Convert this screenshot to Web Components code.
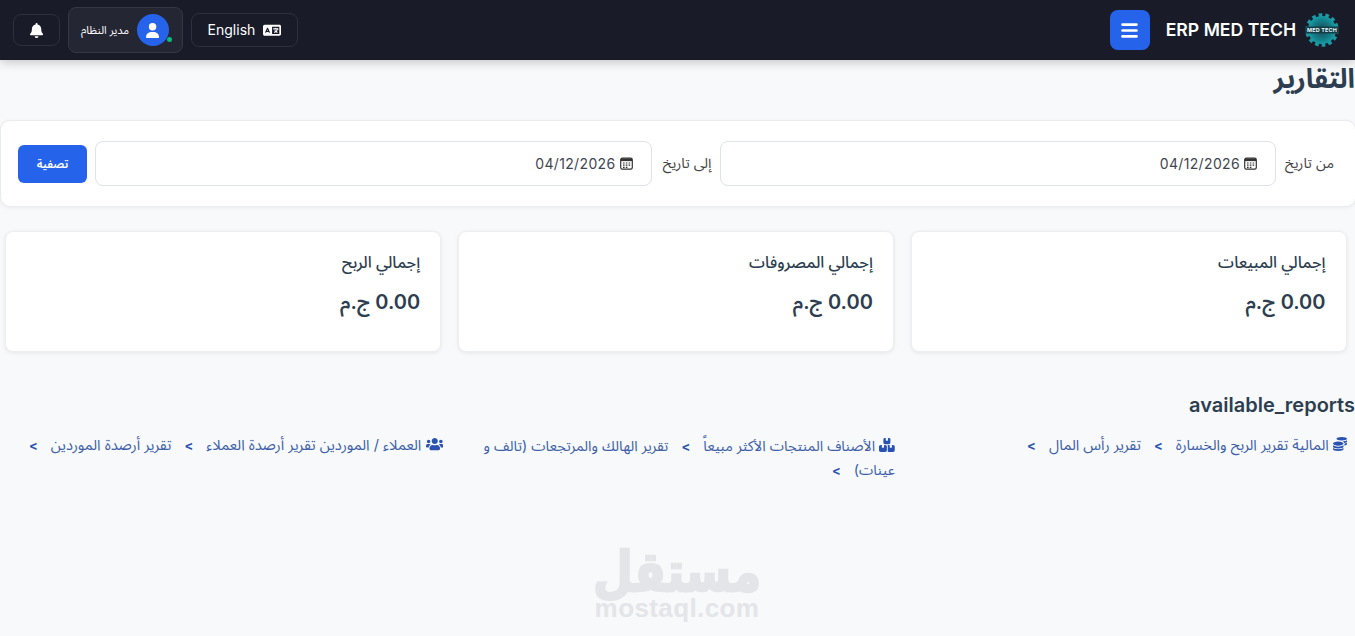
<!DOCTYPE html>
<html lang="ar" dir="rtl">
<head>
<meta charset="utf-8">
<title>التقارير</title>
<style>
html,body{margin:0;padding:0;background:#f8f9fb;overflow:hidden}
body{font-family:Inter,"Noto Sans Arabic","Noto Sans","DejaVu Sans",sans-serif;color:#2c3e50;height:636px;position:relative}
main{display:block}
</style>
</head>
<body>
<app-header></app-header>
<main>
  <page-title>التقارير</page-title>
  <filter-card></filter-card>
  <stat-row>
    <stat-card label="إجمالي المبيعات" value="0.00 ج.م"></stat-card>
    <stat-card label="إجمالي المصروفات" value="0.00 ج.م"></stat-card>
    <stat-card label="إجمالي الربح" value="0.00 ج.م"></stat-card>
  </stat-row>
  <report-section heading="available_reports">
    <report-group icon="coins" name="المالية" links="تقرير الربح والخسارة|تقرير رأس المال"></report-group>
    <report-group icon="boxes" name="الأصناف" links="المنتجات الأكثر مبيعاً|تقرير الهالك والمرتجعات (تالف و عينات)"></report-group>
    <report-group icon="users" name="العملاء / الموردين" links="تقرير أرصدة العملاء|تقرير أرصدة الموردين"></report-group>
  </report-section>
</main>
<water-mark></water-mark>
<script>
const ICONS={
 bell:['0 0 448 512','M224 0c-17.7 0-32 14.3-32 32V51.2C119 66 64 130.6 64 208v18.8c0 47-17.3 92.4-48.5 127.6l-7.4 8.3c-8.4 9.4-10.4 22.9-5.3 34.4S19.4 416 32 416H416c12.6 0 24-7.4 29.2-18.9s3.1-25-5.3-34.4l-7.4-8.3C401.3 319.2 384 273.9 384 226.8V208c0-77.4-55-142-128-156.8V32c0-17.7-14.3-32-32-32zm45.3 493.3c12-12 18.7-28.3 18.7-45.3H224 160c0 17 6.7 33.3 18.7 45.3s28.3 18.7 45.3 18.7s33.3-6.7 45.3-18.7z'],
 user:['0 0 448 512','M224 256A128 128 0 1 0 224 0a128 128 0 1 0 0 256zm-45.7 48C79.8 304 0 383.8 0 482.3C0 498.7 13.3 512 29.7 512H418.3c16.4 0 29.7-13.3 29.7-29.7C448 383.8 368.2 304 269.7 304H178.3z'],
 users:['0 0 640 512','M96 224c35.3 0 64-28.7 64-64s-28.7-64-64-64-64 28.7-64 64 28.7 64 64 64zm448 0c35.3 0 64-28.7 64-64s-28.7-64-64-64-64 28.7-64 64 28.7 64 64 64zm32 32h-64c-17.6 0-33.5 7.1-45.1 18.6 40.3 22.1 68.9 62 75.1 109.4h66c17.7 0 32-14.3 32-32v-32c0-35.3-28.7-64-64-64zm-256 0c61.9 0 112-50.1 112-112S381.9 32 320 32 208 82.1 208 144s50.1 112 112 112zm76.8 32h-8.3c-20.8 10-43.9 16-68.5 16s-47.6-6-68.5-16h-8.3C179.6 288 128 339.6 128 403.2V432c0 26.5 21.5 48 48 48h288c26.5 0 48-21.5 48-48v-28.8c0-63.6-51.6-115.2-115.2-115.2zm-223.7-13.4C161.5 263.1 145.6 256 128 256H64c-35.3 0-64 28.7-64 64v32c0 17.7 14.3 32 32 32h65.9c6.3-47.4 34.9-87.3 75.2-109.4z'],
 coins:['0 0 512 512','M0 405.3V448c0 35.3 86 64 192 64s192-28.7 192-64v-42.7C342.7 434.4 267.2 448 192 448S41.3 434.4 0 405.3zM320 128c106 0 192-28.7 192-64S426 0 320 0 128 28.7 128 64s86 64 192 64zM0 300.4V352c0 35.3 86 64 192 64s192-28.7 192-64v-51.6c-41.3 34-116.9 51.6-192 51.6S41.3 334.4 0 300.4zm416 11c57.3-11.1 96-31.7 96-55.4v-42.7c-23.2 16.4-57.3 27.6-96 34.5v63.6zM192 160C86 160 0 195.8 0 240s86 80 192 80 192-35.8 192-80-86-80-192-80zm219.3 56.3c60-10.8 100.7-32 100.7-56.3v-42.7c-35.5 25.1-96.5 38.6-160.7 41.8 29.5 14.3 51.2 33.5 60 57.2z'],
 boxes:['0 0 576 512','M248 0H208c-26.5 0-48 21.5-48 48V160c0 35.3 28.7 64 64 64H352c35.3 0 64-28.7 64-64V48c0-26.5-21.5-48-48-48H328V80c0 8.8-7.2 16-16 16H264c-8.8 0-16-7.2-16-16V0zM64 256c-35.3 0-64 28.7-64 64V448c0 35.3 28.7 64 64 64H224c35.3 0 64-28.7 64-64V320c0-35.3-28.7-64-64-64H184v80c0 8.8-7.2 16-16 16H120c-8.8 0-16-7.2-16-16V256H64zM352 512H512c35.3 0 64-28.7 64-64V320c0-35.3-28.7-64-64-64H472v80c0 8.8-7.2 16-16 16H408c-8.8 0-16-7.2-16-16V256H352c-15 0-28.8 5.1-39.7 13.8c4.9 10.4 7.7 22 7.7 34.2V464c0 12.2-2.8 23.8-7.7 34.2C323.2 506.9 337 512 352 512z'],
 language:['0 0 640 512','M0 128C0 92.7 28.7 64 64 64H256h48 16H576c35.3 0 64 28.7 64 64V384c0 35.3-28.7 64-64 64H320 304 256 64c-35.3 0-64-28.7-64-64V128zm320 0V384H576V128H320zM178.3 175.9c-3.2-7.2-10.4-11.9-18.3-11.9s-15.1 4.7-18.3 11.9l-64 144c-4.5 10.1 .1 21.9 10.2 26.4s21.9-.1 26.4-10.2l8.9-20.1h73.6l8.9 20.1c4.5 10.1 16.3 14.6 26.4 10.2s14.6-16.3 10.2-26.4l-64-144zM160 233.2L179 276H141l19-42.8zM448 164c11 0 20 9 20 20v4h44 16c11 0 20 9 20 20s-9 20-20 20h-2l-1.6 4.5c-8.9 24.4-22.4 46.6-39.6 65.4c.9 .6 1.8 1.1 2.7 1.6l18.9 11.3c9.5 5.7 12.5 18 6.9 27.4s-18 12.5-27.4 6.9l-18.9-11.3c-4.5-2.7-8.8-5.5-13.1-8.5c-10.6 7.5-21.9 14-34 19.4l-3.6 1.6c-10.1 4.5-21.9-.1-26.4-10.2s.1-21.9 10.2-26.4l3.6-1.6c6.4-2.9 12.6-6.1 18.5-9.8l-12.2-12.2c-7.8-7.8-7.8-20.5 0-28.3s20.5-7.8 28.3 0l14.6 14.6 .5 .5c12.4-13.1 22.5-28.3 29.8-45H448 376c-11 0-20-9-20-20s9-20 20-20h52v-4c0-11 9-20 20-20z']
};
const svg=(n,h)=>{const[v,d]=ICONS[n];const[,, w,ht]=v.split(' ').map(Number);return `<svg xmlns="http://www.w3.org/2000/svg" viewBox="${v}" height="${h}" width="${h*w/ht}" fill="currentColor" aria-hidden="true"><path d="${d}"/></svg>`};
class Base extends HTMLElement{
  constructor(){super();this.attachShadow({mode:'open'})}
  connectedCallback(){this.shadowRoot.innerHTML=this.render()}
}
class AppHeader extends Base{render(){return `<style>
:host{display:flex;justify-content:space-between;align-items:center;height:60px;box-sizing:border-box;padding:0 16px 0 13px;background:#191b29;color:#fff;box-shadow:0 2px 10px rgba(0,0,0,.22);position:relative;z-index:2}
.side{display:flex;align-items:center}
.brand{gap:9px}
.brand b{font:600 17.6px/1 Inter,sans-serif;direction:ltr;margin-left:7px;white-space:nowrap}
.menu{width:40px;height:40px;border-radius:8px;background:#2563eb;border:0;color:#fff;display:flex;align-items:center;justify-content:center;padding:0}
.tools{gap:8px}
.btn{box-sizing:border-box;display:flex;align-items:center;justify-content:center;border:1px solid #2c2f3e;border-radius:8px;color:#fff;background:transparent}
.lang{width:107px;height:34px;gap:8px;font:400 14px/1 Inter,sans-serif}
.lang span{direction:ltr}
.userb{width:115px;height:46px;background:#242633;border-color:#343744;gap:8px;justify-content:flex-start;padding-inline-start:13px}
.userb span{font-size:11px;white-space:nowrap}
.av{width:32px;height:32px;border-radius:50%;background:#2563eb;display:flex;align-items:center;justify-content:center;position:relative;flex:none}
.av i{position:absolute;width:5px;height:5px;background:#10b981;border-radius:50%;right:-3px;bottom:4px}
.bell{width:47px;height:32px}
</style>
<div class="side brand">
  <svg width="34" height="36" viewBox="0 0 34 36" aria-hidden="true">
    <defs><radialGradient id="g" cx="50%" cy="50%" r="55%"><stop offset="0" stop-color="#164a52"/><stop offset=".65" stop-color="#13808c"/><stop offset="1" stop-color="#1ba6ad"/></radialGradient></defs>
    <circle cx="17" cy="18" r="14.8" fill="none" stroke="#1a9aa5" stroke-width="4" stroke-dasharray="3.6 3.0"/>
    <circle cx="17" cy="18" r="14" fill="url(#g)"/>
    <rect x="0" y="14.5" width="34" height="7" fill="#123f49"/>
    <text x="17" y="20" text-anchor="middle" direction="ltr" font-family="Inter,sans-serif" font-size="5.4" letter-spacing=".2" font-weight="700" fill="#e8f6f6">MED TECH</text>
  </svg>
  <b>ERP MED TECH</b>
  <button class="menu" aria-label="menu"><svg width="17" height="17" viewBox="0 0 17 17" aria-hidden="true"><path d="M1.5 2.6h14M1.5 8.5h14M1.5 14.4h14" stroke="#fff" stroke-width="2.6" stroke-linecap="round"/></svg></button>
</div>
<div class="side tools">
  <div class="btn lang">${svg('language',14.5)}<span>English</span></div>
  <div class="btn userb"><div class="av">${svg('user',15)}<i></i></div><span>مدير النظام</span></div>
  <div class="btn bell">${svg('bell',15)}</div>
</div>`}}
class PageTitle extends Base{render(){return `<style>
:host{display:block;height:60px;box-sizing:border-box}
h1{margin:0;font-size:27px;line-height:37px;font-weight:700;color:#2c3e50}
</style><h1><slot></slot></h1>`}}
class FilterCard extends Base{render(){return `<style>
:host{display:flex;align-items:center;gap:8px;box-sizing:border-box;height:87px;padding:0 21px 0 17px;background:#fff;border:1px solid #e9ebee;border-radius:10px;box-shadow:0 1px 4px rgba(0,0,0,.06);margin-inline:-1px 0}
label{font-size:14.4px;color:#444;white-space:nowrap;display:block;min-width:50px}
label.to{min-width:52px}
.date{flex:1;box-sizing:border-box;height:45px;border:1px solid #dfe2e6;border-radius:8px;display:flex;align-items:center;gap:4px;padding-inline-start:18px;color:#3f4650;background:#fff}
.date span{font:400 14px/1 Inter,sans-serif;direction:ltr;letter-spacing:.35px}
button{width:69px;height:38px;flex:none;border:0;border-radius:6px;background:#2563eb;color:#fff;font:600 11.5px Inter,"Noto Sans Arabic","Noto Sans","DejaVu Sans",sans-serif;padding:0}
</style>
<label>من تاريخ</label>
<div class="date"><date-icon></date-icon><span>04/12/2026</span></div>
<label class="to">إلى تاريخ</label>
<div class="date"><date-icon></date-icon><span>04/12/2026</span></div>
<button>تصفية</button>`}}
class DateIcon extends Base{render(){return `<style>:host{display:inline-flex}</style>
<svg width="13" height="13" viewBox="0 0 13 13" fill="none" aria-hidden="true"><rect x=".7" y="1.2" width="11.6" height="11" rx="1.6" stroke="#333" stroke-width="1.2"/><rect x="1" y="1.5" width="11" height="2.6" fill="#333"/><path d="M3 6h1.6M5.8 6h1.6M8.6 6h1.6M3 8.2h1.6M5.8 8.2h1.6M8.6 8.2h1.6M3 10.3h1.6M5.8 10.3h1.6" stroke="#333" stroke-width="1.2"/></svg>`}}
class StatRow extends Base{render(){return `<style>
:host{display:flex;gap:17px;padding:24px 8.5px 0 5.5px}
</style><slot></slot>`}}
class StatCard extends Base{render(){return `<style>
:host{display:block;flex:1;box-sizing:border-box;height:121px;padding:18.5px 20px 0;background:#fff;border:1px solid #eceef1;border-radius:8px;box-shadow:0 1px 4px rgba(0,0,0,.08)}
.l{font-size:16px;line-height:22px;font-weight:500;color:#2c3e50}
.v{font-size:20px;line-height:30px;font-weight:600;color:#2c3e50;margin-top:14.5px}
</style><div class="l">${this.getAttribute('label')}</div><div class="v">${this.getAttribute('value')}</div>`}}
class ReportSection extends Base{render(){return `<style>
:host{display:block;padding-top:40px}
h2{margin:0;font-size:20px;line-height:27px;font-weight:600;color:#2c3e50;direction:ltr;text-align:right}
.cols{display:grid;grid-template-columns:repeat(3,1fr);gap:0 16px;padding:15px 8px 0 7px}
</style><h2>${this.getAttribute('heading')}</h2><div class="cols"><slot></slot></div>`}}
class ReportGroup extends Base{render(){
 const links=this.getAttribute('links').split('|').map(t=>`<a href="#">${t}<b>&gt;</b></a>`).join('');
 return `<style>
:host{display:block;font-size:14.7px;line-height:23px;color:#3d5fa8}
:host([icon="boxes"]){font-size:14.4px}
svg{vertical-align:-1px;color:#2a52b0}
a{color:inherit;text-decoration:none}
a b{font-family:Inter,sans-serif;font-weight:700;font-size:13px;margin:0 13px;color:#2a52b0}
</style>${svg(this.getAttribute('icon'),14)} ${this.getAttribute('name')} ${links}`}}
class WaterMark extends Base{render(){return `<style>
:host{display:block;position:absolute;left:517px;top:543px;width:320px;text-align:center;color:#e3e5e8;pointer-events:none}
.a{font:700 46px/58px "DejaVu Sans",sans-serif;-webkit-text-stroke:2px #e3e5e8;transform:scaleY(1.2);margin-bottom:-7px}
.b{font:700 26px/28px "Liberation Sans",sans-serif;direction:ltr;letter-spacing:.4px}
</style><div class="a">مستقل</div><div class="b">mostaql.com</div>`}}
customElements.define('app-header',AppHeader);
customElements.define('page-title',PageTitle);
customElements.define('date-icon',DateIcon);
customElements.define('filter-card',FilterCard);
customElements.define('stat-row',StatRow);
customElements.define('stat-card',StatCard);
customElements.define('report-section',ReportSection);
customElements.define('report-group',ReportGroup);
customElements.define('water-mark',WaterMark);
</script>
</body>
</html>
